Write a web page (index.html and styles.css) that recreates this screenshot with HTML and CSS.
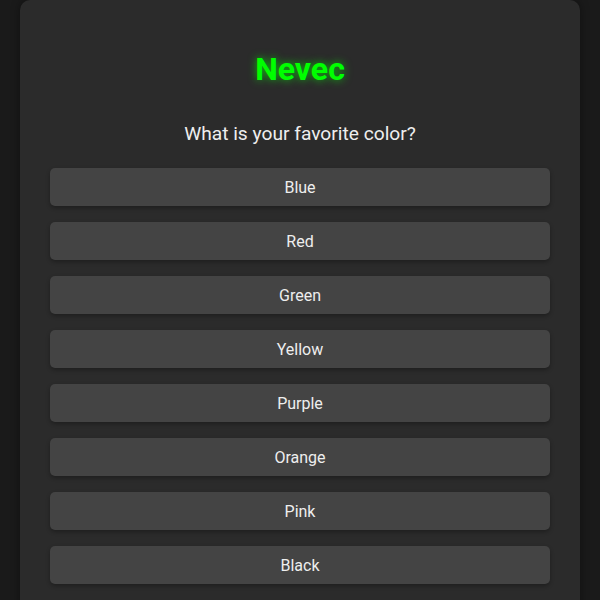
FILE: index.html
```html
<!DOCTYPE html>
<html>
<head>
<meta charset="utf-8">
<link rel="stylesheet" href="styles.css">
</head>
<body>
<div class="card">
  <h1 class="title">Nevec</h1>
  <p class="question">What is your favorite color?</p>
  <div class="options">
    <button class="option">Blue</button>
    <button class="option">Red</button>
    <button class="option">Green</button>
    <button class="option">Yellow</button>
    <button class="option">Purple</button>
    <button class="option">Orange</button>
    <button class="option">Pink</button>
    <button class="option">Black</button>
  </div>
</div>
</body>
</html>
```
FILE: styles.css
```css
html, body {
  margin: 0;
  padding: 0;
  background: #1a1a1a;
  font-family: Roboto, "Liberation Sans", sans-serif;
  color: #eeeeee;
}
.card {
  margin: 0 20px;
  background: #2b2b2b;
  border-radius: 10px;
  padding: 51px 30px 30px;
  box-shadow: 0 0 10px rgba(0,0,0,0.4);
  min-height: 700px;
}
.title {
  margin: 0;
  text-align: center;
  font-size: 32px;
  font-weight: 700;
  line-height: 37px;
  color: #00ff00;
  text-shadow: 0 0 8px rgba(0,255,0,0.7);
}
.question {
  margin: 34px 0 23px;
  text-align: center;
  font-size: 19.2px;
  line-height: 23px;
  color: #eeeeee;
}
.options {
  display: flex;
  flex-direction: column;
  gap: 16px;
}
.option {
  height: 38px;
  border: none;
  border-radius: 5px;
  background: #444444;
  color: #eeeeee;
  font-family: Roboto, "Liberation Sans", sans-serif;
  font-size: 16px;
  box-shadow: 0 2px 4px rgba(0,0,0,0.3);
  padding: 0;
}
```
